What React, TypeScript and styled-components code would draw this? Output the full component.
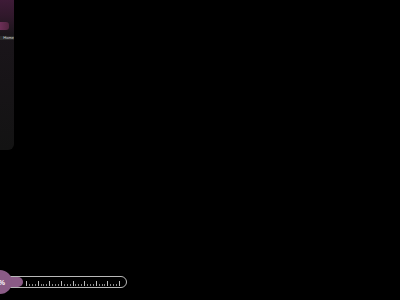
import React from "react";
import styled, { createGlobalStyle } from "styled-components";

const Global = createGlobalStyle`
  html, body { margin: 0; padding: 0; background: #000; }
  body { font-family: "Liberation Sans", Arial, sans-serif; overflow: hidden; }
`;

const Page = styled.div`
  width: 400px;
  height: 300px;
  display: flex;
  flex-direction: column;
  justify-content: space-between;
  background: #000;
  overflow: hidden;
`;

const Sidebar = styled.aside`
  width: 14px;
  height: 150px;
  overflow: hidden;
  border-bottom-right-radius: 6px;
  background: linear-gradient(180deg, #3e1b37 0px, #30182b 16px, #1a151a 34px, #131313 100%);
  display: flex;
  flex-direction: column;
  align-items: flex-end;
  padding-top: 22px;
  box-sizing: border-box;
`;

const NavItem = styled.div`
  width: 9px;
  height: 8px;
  align-self: flex-start;
  border-radius: 0 3px 3px 0;
  background: linear-gradient(90deg, #6c2f57, #51243f);
`;

const Label = styled.div`
  margin-top: 6px;
  width: 14px;
  overflow: hidden;
  display: flex;
  justify-content: flex-end;
  font-size: 4px;
  line-height: 4px;
  color: #d8d8d8;
  white-space: nowrap;
  background: #2a2a2a;
`;

const SliderRow = styled.div`
  position: relative;
  height: 14px;
  margin-bottom: 11px;
  margin-left: -8px;
  width: 136px;
`;

const Track = styled.div`
  position: absolute;
  left: 0;
  top: 1px;
  width: 135px;
  height: 12px;
  border: 1px solid #b9b9b9;
  border-radius: 6px;
  background: #000;
  overflow: hidden;
  box-sizing: border-box;
`;

const Fill = styled.div`
  position: absolute;
  left: 0;
  top: 0;
  bottom: 0;
  border-radius: 0 6px 6px 0;
  background: #8a5b86;
`;

const Ticks = styled.div`
  position: absolute;
  left: 33px;
  right: 6px;
  bottom: 1px;
  height: 5px;
  display: flex;
  justify-content: space-between;
  align-items: flex-end;
`;

const Tick = styled.span<{ $major: boolean }>`
  width: 1px;
  height: ${(p) => (p.$major ? 5 : 2)}px;
  background: ${(p) => (p.$major ? "#bcbcbc" : "#8a8a8a")};
`;

const Knob = styled.div`
  position: absolute;
  left: -4px;
  top: -5px;
  width: 24px;
  height: 24px;
  border-radius: 50%;
  background: #8a5b86;
  color: #fff;
  font-size: 7px;
  font-weight: bold;
  display: flex;
  align-items: center;
  justify-content: flex-end;
  padding-right: 7px;
  box-sizing: border-box;
`;

export default function App() {
  const ticks = Array.from({ length: 33 }, (_, i) => i);
  return (
    <Page>
      <Global />
      <Sidebar>
        <NavItem />
        <Label>Home</Label>
      </Sidebar>
      <SliderRow>
        <Track>
          <Fill style={{ width: "30px" }} />
          <Ticks>
            {ticks.map((i) => (
              <Tick key={i} $major={i % 4 === 0} />
            ))}
          </Ticks>
        </Track>
        <Knob>%</Knob>
      </SliderRow>
    </Page>
  );
}
